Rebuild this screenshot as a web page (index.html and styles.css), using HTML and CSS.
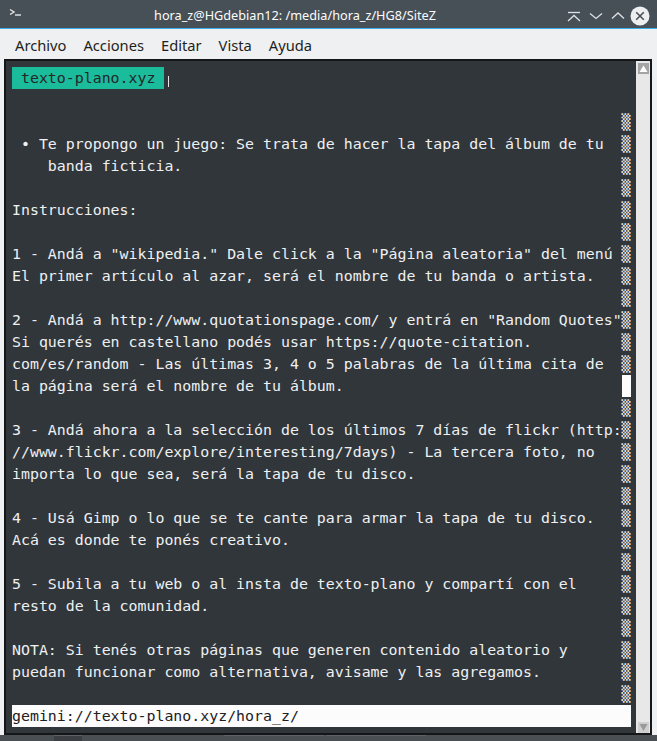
FILE: index.html
```html
<!DOCTYPE html>
<html lang="es">
<head>
<meta charset="utf-8">
<title>hora_z@HGdebian12: /media/hora_z/HG8/SiteZ</title>
<link rel="stylesheet" href="styles.css">
</head>
<body>
<div class="window">
  <header class="titlebar">
    <div class="tb-left">
      <svg class="app-icon" width="30" height="28" viewBox="0 0 30 28">
        <polyline points="10,9.5 14,12 10,14.5" fill="none" stroke="#e6e8ea" stroke-width="1.4"/>
        <line x1="15" y1="15" x2="21" y2="15" stroke="#e6e8ea" stroke-width="1.4"/>
      </svg>
    </div>
    <div class="title">hora_z@HGdebian12: /media/hora_z/HG8/SiteZ</div>
    <div class="tb-right">
      <svg class="btn" width="22" height="28" viewBox="0 0 22 28">
        <line x1="5" y1="12.5" x2="17" y2="12.5" stroke="#dfe1e3" stroke-width="1.3"/>
        <polyline points="5,21 11,15.5 17,21" fill="none" stroke="#dfe1e3" stroke-width="1.3"/>
      </svg>
      <svg class="btn" width="22" height="28" viewBox="0 0 22 28">
        <polyline points="5,13.5 11,18.5 17,13.5" fill="none" stroke="#dfe1e3" stroke-width="1.3"/>
      </svg>
      <svg class="btn" width="22" height="28" viewBox="0 0 22 28">
        <polyline points="5,18.5 11,13 17,18.5" fill="none" stroke="#dfe1e3" stroke-width="1.3"/>
      </svg>
      <svg class="btn" width="22" height="28" viewBox="0 0 22 28">
        <circle cx="11" cy="16" r="9.5" fill="#eceeef"/>
        <line x1="7.2" y1="12.2" x2="14.8" y2="19.8" stroke="#475057" stroke-width="1.6"/>
        <line x1="14.8" y1="12.2" x2="7.2" y2="19.8" stroke="#475057" stroke-width="1.6"/>
      </svg>
    </div>
  </header>

  <nav class="menubar">
    <span>Archivo</span>
    <span>Acciones</span>
    <span>Editar</span>
    <span>Vista</span>
    <span>Ayuda</span>
  </nav>

  <div class="frame">
    <div class="screen">
      <div class="rows">
<pre class="text"><span class="tag"> texto-plano.xyz </span><span class="cursor"></span>


 • Te propongo un juego: Se trata de hacer la tapa del álbum de tu
    banda ficticia.

Instrucciones:

1 - Andá a "wikipedia." Dale click a la "Página aleatoria" del menú
El primer artículo al azar, será el nombre de tu banda o artista.

2 - Andá a http://www.quotationspage.com/ y entrá en "Random Quotes"
Si querés en castellano podés usar https://quote-citation.
com/es/random - Las últimas 3, 4 o 5 palabras de la última cita de
la página será el nombre de tu álbum.

3 - Andá ahora a la selección de los últimos 7 días de flickr (http:
//www.flickr.com/explore/interesting/7days) - La tercera foto, no
importa lo que sea, será la tapa de tu disco.

4 - Usá Gimp o lo que se te cante para armar la tapa de tu disco.
Acá es donde te ponés creativo.

5 - Subila a tu web o al insta de texto-plano y compartí con el
resto de la comunidad.

NOTA: Si tenés otras páginas que generen contenido aleatorio y
puedan funcionar como alternativa, avisame y las agregamos.
 </pre><pre class="bar"> 
 
▒
▒
▒
▒
▒
▒
▒
▒
▒
▒
▒
▒
<span class="thumb"></span>
▒
▒
▒
▒
▒
▒
▒
▒
▒
▒
▒
▒
▒
▒</pre>
      </div>
      <div class="status">gemini://texto-plano.xyz/hora_z/</div>
    </div>
    <div class="scrollbar">
      <svg class="arrow up" width="11" height="11" viewBox="0 0 11 11">
        <rect width="11" height="11" fill="#a4a4a4"/>
        <polygon points="1.5,9 5.5,2.5 9.5,9" fill="#ffffff"/>
      </svg>
      <svg class="arrow down" width="11" height="11" viewBox="0 0 11 11">
        <rect width="11" height="11" fill="#cfcfcf"/>
        <polygon points="1.5,2 5.5,9 9.5,2" fill="#9a9a9a"/>
      </svg>
    </div>
  </div>

  <div class="taskbar">
    <span class="task t1"></span>
    <span class="task t2"></span>
    <span class="task t3"></span>
    <span class="task t4"></span>
    <span class="task t5"></span>
  </div>
</div>
</body>
</html>
```

FILE: styles.css
```css
html, body {
  margin: 0;
  padding: 0;
}

body {
  background: #eff0f1;
  width: 657px;
  height: 741px;
  overflow: hidden;
}

.window {
  width: 657px;
  height: 741px;
  display: flex;
  flex-direction: column;
}

/* Title bar */
.titlebar {
  height: 28px;
  background: #475057;
  border-bottom: 1px solid #3daee9;
  display: flex;
  align-items: center;
  color: #fcfcfc;
  font-family: "Noto Sans", sans-serif;
  font-size: 12.7px;
}

.tb-left {
  width: 30px;
  height: 28px;
}

.app-icon {
  display: block;
}

.title {
  flex: 1;
  text-align: center;
  white-space: nowrap;
  padding-top: 1px;
}

.tb-right {
  width: 97px;
  height: 28px;
  display: flex;
  justify-content: flex-end;
  padding-right: 6px;
  box-sizing: border-box;
}

.btn {
  display: block;
}

/* Menu bar */
.menubar {
  height: 30px;
  display: flex;
  align-items: center;
  padding-left: 6.5px;
  padding-top: 1px;
  box-sizing: border-box;
  font-family: "Noto Sans", sans-serif;
  font-size: 14.7px;
  color: #1d1f21;
}

.menubar span {
  padding: 0 8.5px;
}

/* Terminal frame */
.frame {
  margin: 0 5px 0 4px;
  border: 2px solid #151617;
  height: 672px;
  display: flex;
}

.screen {
  flex: 1;
  background: #31363b;
  padding: 6px 0 6px 6px;
  color: #eef0f1;
  font-family: "DejaVu Sans Mono", monospace;
  font-size: 14.9px;
  line-height: 22px;
}

.rows {
  display: flex;
}

.text, .bar {
  margin: 0;
  font: inherit;
  line-height: 22px;
}

.text {
  width: 68ch;
}

.bar {
  width: 1ch;
  color: #e8e8e8;
}

.tag {
  display: inline-block;
  line-height: 22px;
  vertical-align: top;
  background: #1abc9c;
  color: #232627;
}

.cursor {
  display: inline-block;
  width: 1.5px;
  height: 11px;
  margin-left: 3.5px;
  background: #e8e8e8;
  vertical-align: -4px;
}

.thumb {
  display: inline-block;
  width: 1ch;
  height: 22px;
  background: #fcfcfc;
  vertical-align: top;
}

.status {
  width: 69ch;
  background: #fcfcfc;
  color: #1e2022;
  white-space: pre;
}

/* Scrollbar */
.scrollbar {
  width: 14px;
  background: #e8e8e8;
  display: flex;
  flex-direction: column;
  justify-content: space-between;
  align-items: center;
  padding: 2px 0 0 0;
  box-sizing: border-box;
}

.arrow {
  display: block;
}

/* Taskbar strip */
.taskbar {
  height: 6px;
  background: #4a4f54;
  display: flex;
  gap: 2px;
}

.task {
  display: block;
  height: 6px;
  border-top: 1px solid #5d6268;
  box-sizing: border-box;
}

.t1 { width: 52px; border-top-color: #4a4f54; }
.t2 { width: 28px; background: #3c4045; }
.t3 { width: 138px; border-top-color: #4a4f54; }
.t4 { width: 100px; }
.t5 { width: 100px; }
```
